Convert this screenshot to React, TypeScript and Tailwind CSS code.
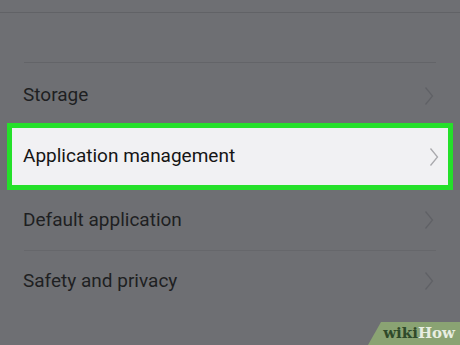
import React from 'react';

function Chevron() {
  return (
    <svg width="10" height="20" viewBox="0 0 10 20" fill="none" className="shrink-0">
      <path d="M1.5 1.5 L8.5 10 L1.5 18.5" stroke="currentColor" strokeWidth="1.3" />
    </svg>
  );
}

type RowProps = {
  label: string;
  highlight?: boolean;
  className?: string;
};

function Row({ label, highlight, className = '' }: RowProps) {
  if (highlight) {
    return (
      <div className="mx-[7px] h-[67px] border-[5px] border-[#25e02a] bg-[#f1f1f3] flex items-center justify-between pl-[11px] pr-[9px] text-[#151515]">
        <span>{label}</span>
        <span className="text-[#a9a9ad]">
          <Chevron />
        </span>
      </div>
    );
  }
  return (
    <div className={`mx-[23px] flex items-center justify-between pr-[3px] text-[#1e1f22] ${className}`}>
      <span>{label}</span>
      <span className="text-[#606166]">
        <Chevron />
      </span>
    </div>
  );
}

export default function App() {
  return (
    <div
      className="relative w-[460px] h-[345px] overflow-hidden bg-[#6e6f73] text-[19px]"
      style={{ fontFamily: 'Roboto, "Noto Sans", sans-serif' }}
    >
      <div className="h-[12px]" />
      <div className="h-px bg-[#616266]" />
      <div className="h-[49px]" />
      <div className="mx-[24px] h-px bg-[#636468]" />
      <Row label="Storage" className="h-[60px] pt-[5px]" />
      <Row label="Application management" highlight />
      <Row label="Default application" className="h-[60px]" />
      <div className="mx-[24px] h-px bg-[#66676b]" />
      <Row label="Safety and privacy" className="h-[60px]" />

      <div
        className="absolute right-0 bottom-0 w-[92px] h-[23px] bg-[#8aa373] flex items-center justify-end pr-[5px] text-[15px] font-bold"
        style={{ clipPath: 'polygon(13px 0, 100% 0, 100% 100%, 0 100%)', fontFamily: '"DejaVu Serif", "Liberation Serif", serif' }}
      >
        <span className="text-[#2f4a2a]">wiki</span>
        <span className="text-[#e8eee2]">How</span>
      </div>
    </div>
  );
}
